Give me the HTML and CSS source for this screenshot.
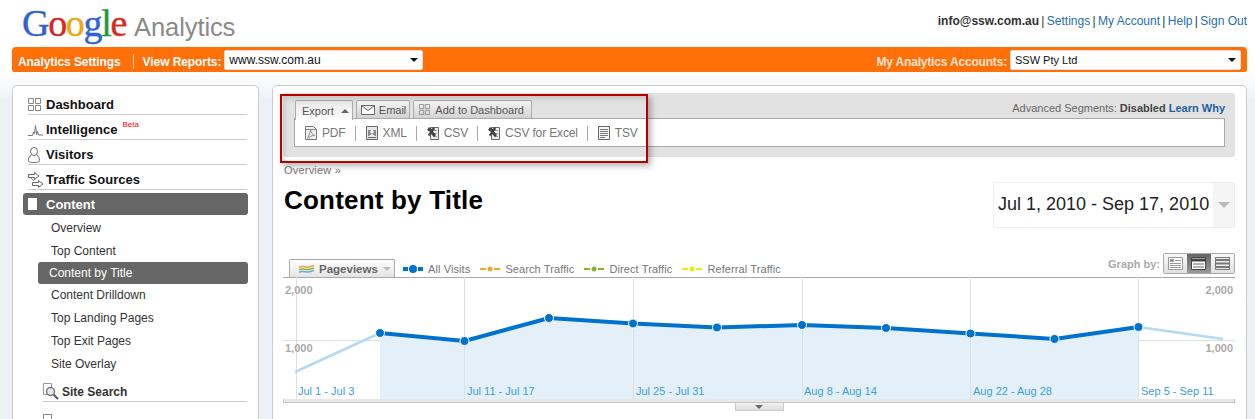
FILE: index.html
```html
<!DOCTYPE html>
<html lang="en">
<head>
  <meta charset="UTF-8">
  <title>Google Analytics - Content by Title</title>
  <link rel="stylesheet" href="styles.css">
</head>
<body>

  <svg class="sprite" width="0" height="0">
    <symbol id="i-grid" viewBox="0 0 13 13">
      <path d="M.5.500h5v5h-5zM7.500.500h5v5h-5zM.5 7.500h5v5h-5zM7.500 7.500h5v5h-5z" fill="none" stroke="#888"/>
    </symbol>
    <symbol id="i-pdf" viewBox="0 0 12 14">
      <path d="M.5.500h8l3 3v10H.5z" fill="#f0f0f0" stroke="#777"/>
      <path d="M.5 3.500h11M3 12.500c1-4 2-6 2.500-9 .5 3 2 5 4 6-3 0-5 1-6.500 3z" fill="none" stroke="#888"/>
    </symbol>
    <symbol id="i-xml" viewBox="0 0 12 14">
      <path d="M.5.500h11v13H.5z" fill="#e8e8e8" stroke="#666"/>
      <path d="M2 4h8v6H2z" fill="#8a8a8a"/>
      <circle cx="6" cy="5.800" r="1.700" fill="#fff"/>
      <path d="M3.500 10c0-2 5-2 5 0z" fill="#fff"/>
      <path d="M2 11.500h8" stroke="#666"/>
    </symbol>
    <symbol id="i-csv" viewBox="0 0 12 14">
      <path d="M3.500 1.500h8v12h-8z" fill="#eee" stroke="#666"/>
      <path d="M5 4.500h5M6 7.500h4M6 10.500h4" stroke="#999"/>
      <path d="M0 4l2-3 2.500 2L7 1l1 2-2 2.500L9 9l-2 2-3-3-2 2.500-1-2L3 6z" fill="#444"/>
    </symbol>
    <symbol id="i-tsv" viewBox="0 0 12 14">
      <path d="M.5.500h11v13H.5z" fill="#f4f4f4" stroke="#666"/>
      <path d="M2 3.500h8M2 5.500h8M2 7.500h8M2 9.500h8M2 11.500h5" stroke="#777"/>
    </symbol>
  </svg>

  <header class="top">
    <div class="logo">
      <span class="google"><span class="c-blue">G</span><span class="c-red">o</span><span class="c-yellow">o</span><span class="c-blue">g</span><span class="c-green">l</span><span class="c-red">e</span></span>
      <span class="analytics">Analytics</span>
    </div>
    <div class="toplinks">
      <strong>info@ssw.com.au</strong> | <a href="#">Settings</a> | <a href="#">My Account</a> | <a href="#">Help</a> | <a href="#">Sign Out</a>
    </div>
  </header>

  <div class="orangebar">
    <span class="bar-link">Analytics Settings</span>
    <span class="bar-sep"></span>
    <span class="bar-link">View Reports:</span>
    <div class="fake-select site-select">www.ssw.com.au<i class="arrow"></i></div>
    <span class="bar-link accounts">My Analytics Accounts:</span>
    <div class="fake-select account-select">SSW Pty Ltd<i class="arrow"></i></div>
  </div>

  <div class="columns">
    <nav class="sidenav">
      <a class="nav-row" href="#">
        <svg class="nav-icon" viewBox="0 0 18 16"><path d="M.5 1.500h5v5h-5zM7.500 1.500h5v5h-5zM.5 8.500h5v5h-5zM7.500 8.500h5v5h-5z" fill="none" stroke="#888"/></svg>Dashboard
      </a>
      <a class="nav-row" href="#">
        <svg class="nav-icon" viewBox="0 0 18 16"><path d="M0 13.500h4.500L5.500 10l1 1.500 1-8 1.200 9 .8-3 1 3.500H15" fill="none" stroke="#777"/></svg>Intelligence<sup class="beta">Beta</sup>
      </a>
      <a class="nav-row" href="#">
        <svg class="nav-icon" viewBox="0 0 18 16"><ellipse cx="6" cy="4.500" rx="3.500" ry="4" fill="none" stroke="#666"/><path d="M3.500 8C1.500 9 .5 11 .5 13c0 2 1.500 2.500 5.500 2.500s5.500-.5 5.500-2.500c0-2-1-4-3-5" fill="none" stroke="#666"/></svg>Visitors
      </a>
      <a class="nav-row" href="#">
        <svg class="nav-icon" viewBox="0 0 18 16"><path d="M.5 2.500h6V.5l4.500 3.500-4.500 3.500v-2h-6zM4.500 10.500h6v-2l4.500 3.500-4.500 3.500v-2h-6z" fill="#fff" stroke="#666"/><path d="M3 6l3 3" stroke="#888"/></svg>Traffic Sources
      </a>
      <a class="nav-active" href="#"><span class="page-icon"></span>Content</a>
      <a class="sub" href="#">Overview</a>
      <a class="sub" href="#">Top Content</a>
      <a class="sub sub-active" href="#">Content by Title</a>
      <a class="sub" href="#">Content Drilldown</a>
      <a class="sub" href="#">Top Landing Pages</a>
      <a class="sub" href="#">Top Exit Pages</a>
      <a class="sub" href="#">Site Overlay</a>
      <a class="nav-small" href="#">
        <svg class="search-icon" viewBox="0 0 16 17"><path d="M.5.500h8v11h-8z" fill="#fff" stroke="#999"/><circle cx="7.500" cy="8.500" r="4" fill="#e8e8e8" stroke="#777" stroke-width="1.500"/><path d="M10.500 11.500l4.500 4.500" stroke="#555" stroke-width="2"/></svg>Site Search
      </a>
      <div class="next-icon"></div>
    </nav>

    <main class="content">
      <div class="callout"></div>

      <section class="toolbar">
        <div class="tabs">
          <a class="tab tab-open" href="#">Export<i class="up"></i></a>
          <a class="tab tab-mail" href="#">
            <svg class="mail" viewBox="0 0 14 10"><path d="M.5.500h13v9H.5zM.5.500l6.500 5 6.500-5" fill="#fff" stroke="#666"/></svg>Email
          </a>
          <a class="tab" href="#"><svg class="tab-icon"><use href="#i-grid"/></svg>Add to Dashboard</a>
          <div class="segments">Advanced Segments: <b>Disabled</b> <a href="#">Learn Why</a></div>
        </div>
        <div class="exports">
          <a class="export" href="#"><svg class="tool-icon"><use href="#i-pdf"/></svg>PDF</a>
          <a class="export" href="#"><svg class="tool-icon"><use href="#i-xml"/></svg>XML</a>
          <a class="export" href="#"><svg class="tool-icon"><use href="#i-csv"/></svg>CSV</a>
          <a class="export" href="#"><svg class="tool-icon"><use href="#i-csv"/></svg>CSV for Excel</a>
          <a class="export" href="#"><svg class="tool-icon"><use href="#i-tsv"/></svg>TSV</a>
        </div>
      </section>

      <div class="crumb"><a href="#">Overview</a> »</div>

      <div class="title-row">
        <h1>Content by Title</h1>
        <div class="daterange">
          <span class="dates">Jul 1, 2010 - Sep 17, 2010</span>
          <span class="date-btn"><i class="down"></i></span>
        </div>
      </div>

      <div class="chart-head">
        <div class="metric">
          <svg class="metric-icon" viewBox="0 0 15 10"><path d="M0 3.500c4-3 8 2 15-2" fill="none" stroke="#e8a33d" stroke-width="1.500"/><path d="M0 6c4-3 8 2 15-2" fill="none" stroke="#8ab32c" stroke-width="1.500"/><path d="M0 8.500c4-3 8 2 15-2" fill="none" stroke="#6fa8dc" stroke-width="1.500"/></svg>
          Pageviews<i class="down small"></i>
        </div>
        <div class="legend">
          <svg class="key" viewBox="0 0 20 8"><path d="M0 4h20" stroke="#0072ce" stroke-width="4" stroke-dasharray="5 2 6 2 5"/><circle cx="10" cy="4" r="4" fill="#0072ce"/></svg>All Visits
        </div>
        <div class="legend">
          <svg class="key" viewBox="0 0 20 8"><path d="M0 4h20" stroke="#f0a830" stroke-width="2" stroke-dasharray="6 8 6"/><circle cx="10" cy="4" r="2.500" fill="#f0a830"/></svg>Search Traffic
        </div>
        <div class="legend">
          <svg class="key" viewBox="0 0 20 8"><path d="M0 4h20" stroke="#8ab32c" stroke-width="2" stroke-dasharray="6 8 6"/><circle cx="10" cy="4" r="2.500" fill="#8ab32c"/></svg>Direct Traffic
        </div>
        <div class="legend">
          <svg class="key" viewBox="0 0 20 8"><path d="M0 4h20" stroke="#eeea10" stroke-width="2" stroke-dasharray="6 8 6"/><circle cx="10" cy="4" r="2.500" fill="#eeea10"/></svg>Referral Traffic
        </div>
        <div class="graphby">
          <span>Graph by:</span>
          <div class="seg-btns">
            <span class="seg"><svg viewBox="0 0 15 13"><path d="M.5.500h14v12H.5z" fill="#fff" stroke="#999"/><path d="M2 2h4v3H2z" fill="#999"/><path d="M7 3.500h6M2 6.500h11M2 8.500h11M2 10.500h11" stroke="#999"/></svg></span>
            <span class="seg seg-on"><svg viewBox="0 0 15 13"><path d="M.5.500h14v12H.5z" fill="#fff" stroke="#444"/><path d="M1 3h13" stroke="#444" stroke-width="3"/><path d="M2 7h11M2 10h11" stroke="#666"/></svg></span>
            <span class="seg"><svg viewBox="0 0 15 13"><path d="M.5.500h14v12H.5z" fill="#eee" stroke="#777"/><path d="M1 3h13M1 6.500h13M1 10h13" stroke="#777" stroke-width="2"/></svg></span>
          </div>
        </div>
      </div>

      <svg class="chart" viewBox="283 277 952 122">
        <path class="grid-h" d="M283 277.500h952"/>
        <path class="grid-h light" d="M283 340.500h952"/>
        <path class="area" d="M380 333L464.500 341L549 318L633 323.500L717 327.500L802 325L886 328L970.500 333.500L1054.500 339L1138.500 327V399H380Z"/>
        <path class="grid-v" d="M296.500 277v122M464.500 277v122M633.500 277v122M802.500 277v122M970.500 277v122M1138.500 277v122"/>
        <path class="tail" d="M295 372L380 333M1138.500 327L1223 339"/>
        <path class="visits" d="M380 333L464.500 341L549 318L633 323.500L717 327.500L802 325L886 328L970.500 333.500L1054.500 339L1138.500 327"/>
        <g class="dots">
          <circle cx="380" cy="333" r="4.500"/><circle cx="464.500" cy="341" r="4.500"/>
          <circle cx="549" cy="318" r="4.500"/><circle cx="633" cy="323.500" r="4.500"/>
          <circle cx="717" cy="327.500" r="4.500"/><circle cx="802" cy="325" r="4.500"/>
          <circle cx="886" cy="328" r="4.500"/><circle cx="970.500" cy="333.500" r="4.500"/>
          <circle cx="1054.500" cy="339" r="4.500"/><circle cx="1138.500" cy="327" r="4.500"/>
        </g>
        <text class="yval" x="285" y="294">2,000</text>
        <text class="yval" x="285" y="352">1,000</text>
        <text class="yval" x="1233" y="294" text-anchor="end">2,000</text>
        <text class="yval" x="1233" y="352" text-anchor="end">1,000</text>
        <text class="xval" x="298" y="395">Jul 1 - Jul 3</text>
        <text class="xval" x="467" y="395">Jul 11 - Jul 17</text>
        <text class="xval" x="636" y="395">Jul 25 - Jul 31</text>
        <text class="xval" x="804" y="395">Aug 8 - Aug 14</text>
        <text class="xval" x="973" y="395">Aug 22 - Aug 28</text>
        <text class="xval" x="1141" y="395">Sep 5 - Sep 11</text>
      </svg>
      <div class="scrollbar"></div>
      <div class="chart-toggle"><i class="down tiny"></i></div>
    </main>
  </div>

</body>
</html>
```

FILE: styles.css
```css
html, body {
  height: 419px;
  overflow: hidden;
}

body {
  margin: 0;
  padding: 0 8px 0 12px;
  font-family: "Liberation Sans", Arial, sans-serif;
  font-size: 12px;
  color: #333;
  background: linear-gradient(#fff 0, #fff 70px, #edf1f6 100px);
}

a {
  color: inherit;
  text-decoration: none;
}

.sprite {
  position: absolute;
}

/* header */
.top {
  height: 47px;
  display: flex;
  justify-content: space-between;
}

.logo {
  display: flex;
  align-items: baseline;
  padding: 0 0 0 10px;
  height: 46px;
}

.google {
  font-family: "Liberation Serif", serif;
  font-size: 38px;
  line-height: 46px;
  letter-spacing: -1.300px;
  -webkit-text-stroke: 0.4px;
}

.c-blue { color: #2f62d8; }
.c-red { color: #d8281c; }
.c-yellow { color: #eba912; }
.c-green { color: #1e9a3a; }

.analytics {
  margin-left: 8px;
  font-size: 25.500px;
  color: #8a8a8a;
  letter-spacing: -.1px;
}

.toplinks {
  padding-top: 14px;
  color: #333;
  word-spacing: -1px;
}

.toplinks strong {
  color: #333;
  word-spacing: 0;
}

.toplinks a {
  color: #2a6cb0;
  word-spacing: 0;
}

.orangebar {
  height: 25px;
  padding: 0 6px 0 6px;
  display: flex;
  align-items: center;
  background-color: #ff7009;
  border-radius: 4px 4px 2px 2px;
}

.bar-link {
  padding-top: 4px;
  color: #fff;
  font-weight: bold;
  letter-spacing: -.08px;
}

.bar-sep {
  width: 1px;
  height: 15px;
  margin: 4px 9px 0 12px;
  background-color: #ffd9bd;
}

.accounts {
  margin-left: auto;
  color: #ffe3cf;
  letter-spacing: -.18px;
}

.fake-select {
  position: relative;
  margin-left: 3px;
  padding-left: 4px;
  height: 20px;
  line-height: 18px;
  box-sizing: border-box;
  background-color: #fff;
  border: 1px solid #ddd;
  border-radius: 2px;
  color: #111;
}

.site-select {
  width: 199px;
}

.account-select {
  width: 231px;
  font-size: 11px;
}

.arrow {
  position: absolute;
  right: 4px;
  top: 7px;
  border: 4px solid transparent;
  border-top: 4px solid #111;
  border-bottom: 0;
}

/* columns */
.columns {
  display: flex;
  gap: 13px;
  margin-top: 13px;
}

.sidenav {
  width: 247px;
  height: 340px;
  flex: none;
  box-sizing: border-box;
  padding: 4px 10px 0 10px;
  background-color: #fff;
  border: 1px solid #ccc;
  border-radius: 5px 5px 0 0;
}

.nav-row {
  display: flex;
  align-items: center;
  height: 25px;
  box-sizing: border-box;
  padding-top: 5px;
  margin-left: 5px;
  margin-right: 1px;
  border-bottom: 1px solid #ccc;
  font-size: 13px;
  font-weight: bold;
  color: #111;
}

.nav-icon {
  width: 18px;
  height: 16px;
  flex: none;
}

.beta {
  align-self: flex-start;
  margin: 0 0 0 5px;
  font-size: 8px;
  font-weight: normal;
  color: #f00;
}

.nav-active {
  display: flex;
  align-items: center;
  height: 22px;
  margin-top: 3px;
  background-color: #666;
  border-radius: 3px;
  font-size: 13px;
  font-weight: bold;
  color: #fff;
}

.page-icon {
  width: 9px;
  height: 12px;
  margin: 0 9px 0 5px;
  background-color: #fff;
}

.sub {
  display: block;
  height: 22px;
  line-height: 22px;
  margin: 1px 0 0 15px;
  padding-left: 13px;
  color: #333;
}

.nav-active + .sub {
  margin-top: 2px;
}

.sub-active,
.sub-active + .sub {
  margin-top: 0;
}

.sub-active {
  padding-left: 11px;
  background-color: #666;
  border-radius: 3px;
  color: #fff;
}

.nav-small {
  display: flex;
  align-items: flex-end;
  height: 22px;
  box-sizing: border-box;
  margin: 5px 1px 0 19px;
  border-bottom: 1px solid #ccc;
  font-weight: bold;
  line-height: 17px;
  color: #333;
}

.search-icon {
  width: 16px;
  height: 17px;
  margin: -3px 3px 1px 1px;
}

.next-icon {
  width: 7px;
  height: 10px;
  margin: 12px 0 0 20px;
  border: 1px solid #888;
}

/* right panel */
.content {
  position: relative;
  flex: 1;
  height: 340px;
  box-sizing: border-box;
  padding: 7px 11px 0 10px;
  background-color: #fff;
  border: 1px solid #ccc;
  border-radius: 5px 5px 0 0;
}

.callout {
  position: absolute;
  left: 7px;
  top: 8px;
  width: 364px;
  height: 65px;
  border: 2px solid #b50000;
  box-shadow: 3px 3px 6px rgba(0,0,0,.3), inset 3px 3px 5px rgba(0,0,0,.12);
  z-index: 2;
}

.toolbar {
  height: 64px;
  box-sizing: border-box;
  padding: 7px 10px 0 11px;
  background-color: #e2e2e2;
  border-radius: 3px;
}

.tabs {
  display: flex;
  gap: 3px;
  height: 18px;
  padding-left: 1px;
}

.tab {
  display: flex;
  align-items: center;
  height: 18px;
  box-sizing: border-box;
  padding: 0 7px 0 5px;
  background: linear-gradient(#f4f4f4, #d2d2d2);
  border: 1px solid #aaa;
  border-bottom: 0;
  border-radius: 2px 2px 0 0;
  font-size: 11px;
  color: #555;
}

.tab-open {
  position: relative;
  height: 20px;
  padding: 0 3px 0 6px;
  background: linear-gradient(#e8e8e8, #fff);
  z-index: 1;
}

.tab-mail {
  padding: 0 3px 0 4px;
}

.up {
  margin-left: 7px;
  border: 4px solid transparent;
  border-bottom: 4px solid #666;
  border-top: 0;
}

.mail {
  width: 14px;
  height: 10px;
  margin-right: 4px;
}

.tab-icon {
  width: 11px;
  height: 11px;
  margin-right: 5px;
  flex: none;
}

.tool-icon {
  width: 12px;
  height: 14px;
  margin-right: 5px;
  flex: none;
}

.segments {
  margin-left: auto;
  padding-top: 2px;
  font-size: 11px;
  color: #666;
}

.segments b {
  color: #444;
}

.segments a {
  color: #1f5f9e;
  font-weight: bold;
}

.exports {
  display: flex;
  align-items: center;
  height: 29px;
  box-sizing: border-box;
  padding: 1px 0 0 10px;
  background-color: #fff;
  border: 1px solid #aaa;
}

.export {
  display: flex;
  align-items: center;
  padding-right: 9px;
  margin-right: 10px;
  border-right: 1px solid #aaa;
  height: 15px;
  letter-spacing: -.15px;
  color: #777;
}

.export:last-child {
  border-right: 0;
}

.crumb {
  margin: 7px 0 0 1px;
  height: 12px;
  line-height: 12px;
  font-size: 11px;
  letter-spacing: .2px;
  color: #777;
}

.title-row {
  display: flex;
  justify-content: space-between;
  margin-top: 6px;
  height: 46px;
}

h1 {
  margin: 2px 0 0 1px;
  font-size: 26px;
  line-height: 32px;
  letter-spacing: .2px;
  color: #000;
}

.daterange {
  display: flex;
  width: 242px;
  box-sizing: border-box;
  border: 1px solid #eee;
  border-radius: 2px;
}

.dates {
  flex: 1;
  padding-left: 4px;
  line-height: 43px;
  font-size: 18px;
  color: #222;
  white-space: nowrap;
}

.date-btn {
  width: 21px;
  display: flex;
  align-items: center;
  justify-content: center;
  background-color: #f5f5f5;
}

.down {
  border: 6px solid transparent;
  border-top: 6px solid #bbb;
  border-bottom: 0;
}

.down.small {
  margin-left: 5px;
  border-width: 4px 4px 0;
}

.down.tiny {
  border-width: 4px 4px 0;
  border-top-color: #666;
}

.chart-head {
  display: flex;
  align-items: flex-end;
  height: 24px;
  margin-top: 25px;
  padding-left: 6px;
  font-size: 11px;
  letter-spacing: .1px;
  color: #777;
}

.metric {
  display: flex;
  align-items: center;
  width: 106px;
  height: 18px;
  box-sizing: border-box;
  padding-left: 9px;
  margin-right: 8px;
  background: linear-gradient(#fff, #e4e4e4);
  border: 1px solid #aaa;
  border-bottom: 0;
  border-radius: 2px 2px 0 0;
  font-size: 11.500px;
  letter-spacing: 0;
  font-weight: bold;
  color: #666;
}

.metric-icon {
  width: 15px;
  height: 10px;
  margin-right: 5px;
}

.legend {
  display: flex;
  align-items: center;
  height: 16px;
  margin-right: 10px;
}

.key {
  width: 20px;
  height: 8px;
  margin-right: 5px;
}

.graphby {
  display: flex;
  align-items: flex-end;
  margin-left: auto;
  height: 24px;
  padding-bottom: 3px;
  box-sizing: border-box;
  font-weight: bold;
  letter-spacing: 0;
  color: #aaa;
}

.graphby > span {
  padding-bottom: 4px;
}

.seg-btns {
  display: flex;
  width: 72px;
  box-sizing: border-box;
  margin-left: 3px;
  border: 1px solid #aaa;
  border-radius: 2px;
}

.seg {
  display: flex;
  flex: 1;
  align-items: center;
  justify-content: center;
  height: 19px;
  background: linear-gradient(#fafafa, #e0e0e0);
}

.seg svg {
  width: 15px;
  height: 13px;
}

.seg-on {
  background: linear-gradient(#666, #999);
}

.chart {
  display: block;
  width: 952px;
  height: 122px;
  font-family: "Liberation Sans", Arial, sans-serif;
}

.grid-h {
  stroke: #aaa;
  fill: none;
}

.grid-h.light {
  stroke: #dde1e6;
}

.grid-v {
  stroke: #dce1e6;
  fill: none;
}

.area {
  fill: #e3f0f9;
}

.tail {
  fill: none;
  stroke: #b5d9f2;
  stroke-width: 2.5;
}

.visits {
  fill: none;
  stroke: #0072ce;
  stroke-width: 4;
}

.dots circle {
  fill: #0072ce;
  stroke: #fff;
  stroke-width: 1;
}

.yval {
  font-size: 11px;
  font-weight: bold;
  fill: #aaa;
}

.xval {
  font-size: 11px;
  fill: #3c9ede;
}

.scrollbar {
  height: 4px;
  box-sizing: border-box;
  background-color: #e8e8e8;
  border: 1px solid #c4c4c4;
  border-top: 0;
}

.chart-toggle {
  width: 49px;
  height: 8px;
  margin: 0 auto;
  display: flex;
  align-items: center;
  justify-content: center;
  background: linear-gradient(#f2f2f2, #ddd);
  border: 1px solid #ccc;
  border-top: 0;
  box-sizing: border-box;
}
```
